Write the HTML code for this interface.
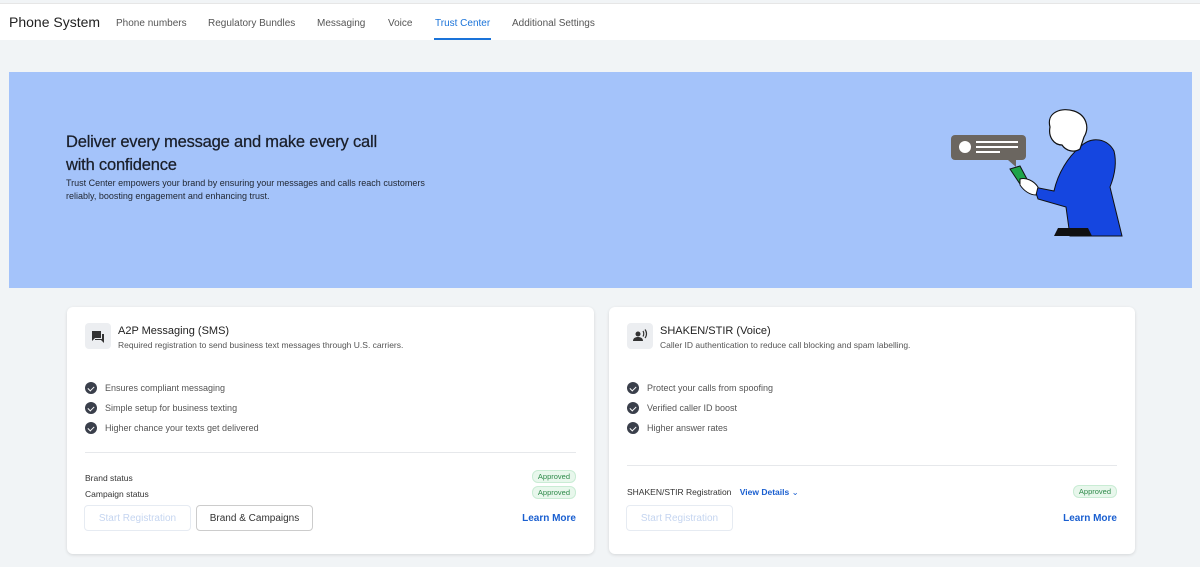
<!DOCTYPE html>
<html><head><meta charset="utf-8"><style>
*{box-sizing:border-box;margin:0;padding:0}
body{width:1200px;height:567px;overflow:hidden;background:#f1f4f6;font-family:"Liberation Sans",sans-serif;position:relative;color:#222}
.hdr{position:absolute;left:0;top:3px;width:1200px;height:37px;background:#fff;border-top:1px solid #e6e6e6}
.hdr .t{position:absolute;left:9px;top:10px;font-size:14px;color:#222}
.hdr a{position:absolute;top:14px;font-size:10px;color:#555;text-decoration:none}
.hdr a.on{color:#1a73d9}
.ul{position:absolute;left:434px;width:57px;height:2px;background:#1a73d9}
.ban{position:absolute;left:9px;top:72px;width:1183px;height:216px;background:#a4c3fa}
.ban h1{position:absolute;left:57px;top:59px;font-size:16.5px;font-weight:normal;line-height:23px;color:#1a1f2a;width:340px;letter-spacing:-0.2px;-webkit-text-stroke:0.25px #1a1f2a}
.ban p{position:absolute;left:57px;top:105px;font-size:9px;line-height:13px;color:#1f2530;width:385px}
.card{position:absolute;top:307px;height:247px;background:#fff;border-radius:6px;box-shadow:0 1px 3px rgba(0,0,0,.12)}
.ic{position:absolute;left:18px;top:16px;width:26px;height:26px;background:#eceef1;border-radius:4px}
.ct{position:absolute;left:51px;top:18px;font-size:11px;color:#222}
.cs{position:absolute;left:51px;top:33px;font-size:8.5px;color:#555}
.li{position:absolute;left:18px;font-size:9px;color:#555}
.li i{display:inline-block;width:12px;height:12px;border-radius:50%;background:#3a3f4b;vertical-align:-3px;margin-right:8px;position:relative}
.li i:after{content:"";position:absolute;left:3.5px;top:2.5px;width:3px;height:5px;border:solid #fff;border-width:0 1.5px 1.5px 0;transform:rotate(45deg)}
.hr{position:absolute;left:18px;right:18px;height:1px;background:#e6e8eb}
.lb{position:absolute;left:18px;font-size:8.5px;color:#333}
.ap{position:absolute;right:18px;font-size:7.5px;color:#2e8a4a;background:#e8f7ec;border:1px solid #c9ecd4;border-radius:6px;padding:1px 5px}
.btn{position:absolute;top:198px;height:26px;border:1px solid #ddd;border-radius:4px;font-size:10px;line-height:25px;text-align:center}
.lm{position:absolute;right:18px;top:206px;font-size:10px;font-weight:bold;color:#1a5fd0}
</style></head><body>
<div class="hdr"><div class="t">Phone System</div>
<a style="left:116px">Phone numbers</a><a style="left:208px">Regulatory Bundles</a><a style="left:317px">Messaging</a><a style="left:388px">Voice</a><a class="on" style="left:435px">Trust Center</a><a style="left:512px">Additional Settings</a>
<div class="ul" style="top:34px"></div></div>
<div class="ban"><h1>Deliver every message and make every call with confidence</h1>
<p>Trust Center empowers your brand by ensuring your messages and calls reach customers reliably, boosting engagement and enhancing trust.</p>
<svg style="position:absolute;left:933px;top:35px" width="190" height="130" viewBox="0 0 190 130">
<rect x="9" y="28" width="75" height="25" rx="4" fill="#6b6660"/><path d="M66 53 L74 53 L74 60 Z" fill="#6b6660"/>
<circle cx="23" cy="40" r="6" fill="#fff"/><rect x="34" y="34" width="42" height="2" fill="#fff"/><rect x="34" y="39" width="42" height="2" fill="#fff"/><rect x="34" y="44" width="24" height="2" fill="#fff"/>
<path d="M138 40 C150 28 166 32 172 44 C176 60 170 75 168 80 L180 129 L128 129 L124 100 L96 92 L92 80 L112 84 C116 66 126 50 138 40 Z" fill="#1546e0" stroke="#111" stroke-width="1"/>
<path d="M108 20 C104 5 120 0 132 4 C144 8 148 20 142 30 L138 42 C132 46 124 44 120 38 C112 38 106 30 108 20 Z" fill="#fff" stroke="#111" stroke-width="1.2"/>
<path d="M68 62 L78 59 L86 74 L78 77 Z" fill="#1ea34a" stroke="#111" stroke-width="1"/>
<path d="M78 72 C84 70 92 74 96 80 L94 88 C88 88 82 84 78 78 Z" fill="#fff" stroke="#111" stroke-width="1"/>
<path d="M116 121 L146 121 L150 129 L112 129 Z" fill="#111"/>
</svg></div>

<div class="card" style="left:67px;width:527px">
<div class="ic"><svg width="26" height="26" viewBox="0 0 26 26"><path d="M7 8h9v7H10l-3 3z" fill="#333"/><path d="M17 11h2v9l-3-3h-6v-1h7z" fill="#333"/></svg></div>
<div class="ct">A2P Messaging (SMS)</div><div class="cs">Required registration to send business text messages through U.S. carriers.</div>
<div class="li" style="top:75px"><i></i>Ensures compliant messaging</div>
<div class="li" style="top:95px"><i></i>Simple setup for business texting</div>
<div class="li" style="top:115px"><i></i>Higher chance your texts get delivered</div>
<div class="hr" style="top:145px"></div>
<div class="lb" style="top:166px">Brand status</div><div class="ap" style="top:163px">Approved</div>
<div class="lb" style="top:182px">Campaign status</div><div class="ap" style="top:179px">Approved</div>
<div class="btn" style="left:17px;width:107px;color:#c5d5f0;border-color:#e6ebf2">Start Registration</div>
<div class="btn" style="left:129px;width:117px;color:#333;border-color:#ccc">Brand &amp; Campaigns</div>
<div class="lm">Learn More</div></div>

<div class="card" style="left:609px;width:526px">
<div class="ic"><svg width="26" height="26" viewBox="0 0 26 26"><circle cx="11" cy="11" r="2.5" fill="#333"/><path d="M6 18c0-3 2.5-4 5-4s5 1 5 4z" fill="#333"/><path d="M16 8c1 1.5 1 4 0 5.5M18 6.5c2 2.5 2 6 0 8.5" stroke="#333" stroke-width="1.2" fill="none"/></svg></div>
<div class="ct">SHAKEN/STIR (Voice)</div><div class="cs">Caller ID authentication to reduce call blocking and spam labelling.</div>
<div class="li" style="top:75px"><i></i>Protect your calls from spoofing</div>
<div class="li" style="top:95px"><i></i>Verified caller ID boost</div>
<div class="li" style="top:115px"><i></i>Higher answer rates</div>
<div class="hr" style="top:158px"></div>
<div class="lb" style="top:180px">SHAKEN/STIR Registration <span style="color:#1a5fd0;font-weight:bold;margin-left:6px">View Details</span> <span style="color:#1a5fd0">&#8964;</span></div>
<div class="ap" style="top:178px">Approved</div>
<div class="btn" style="left:17px;width:107px;color:#c5d5f0;border-color:#e6ebf2">Start Registration</div>
<div class="lm">Learn More</div></div>
</body></html>
